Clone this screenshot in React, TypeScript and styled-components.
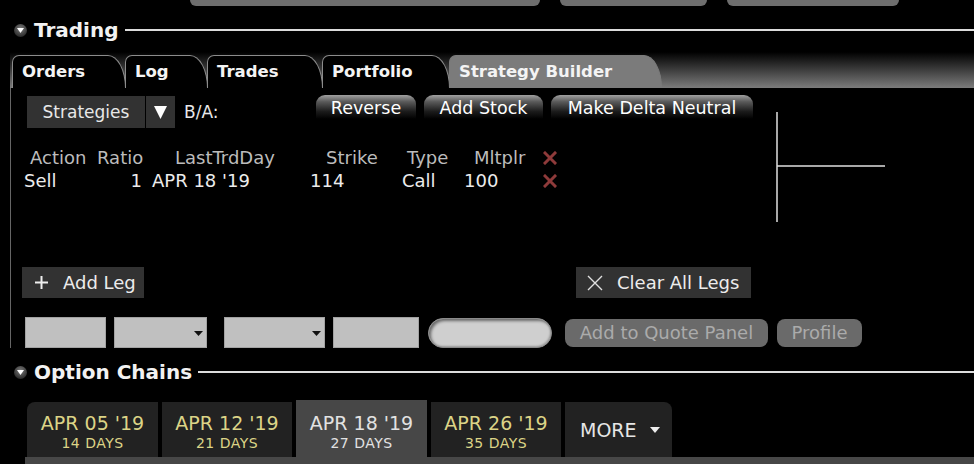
import React from "react";
import styled, { createGlobalStyle } from "styled-components";

const Global = createGlobalStyle`
  html, body { margin: 0; padding: 0; background: #000; overflow: hidden; }
  body { font-family: "DejaVu Sans", Verdana, sans-serif; color: #e6e6e6; }
`;

const Page = styled.div`
  width: 974px;
  height: 464px;
  background: #000;
  display: flex;
  flex-direction: column;
  overflow: hidden;
`;

const TopStrip = styled.div`
  height: 6px;
  display: flex;
  gap: 20px;
  padding-left: 190px;
  flex: none;
`;

const TopShape = styled.div<{ $w: number }>`
  width: ${(p) => p.$w}px;
  height: 6px;
  background: #6e6e6e;
  border-radius: 0 0 6px 6px;
`;

const SectionHeader = styled.div<{ $mt: number }>`
  display: flex;
  align-items: center;
  height: 24px;
  margin-top: ${(p) => p.$mt}px;
  padding-left: 14px;
  flex: none;
`;

const Disclosure = styled.span`
  width: 13px;
  height: 13px;
  border-radius: 50%;
  background: radial-gradient(circle at 50% 35%, #7a7a7a, #2c2c2c 75%);
  display: flex;
  align-items: center;
  justify-content: center;
  flex: none;
`;

const SectionTitle = styled.span`
  margin-left: 7px;
  font-weight: bold;
  font-size: 20px;
  color: #f2f2f2;
  white-space: nowrap;
`;

const Rule = styled.div`
  flex: 1;
  height: 2px;
  background: #dcdcdc;
  margin-left: 6px;
`;

const TabBar = styled.div`
  height: 46px;
  margin-left: 10px;
  padding-left: 2px;
  display: flex;
  align-items: flex-end;
  flex: none;
  background: linear-gradient(to bottom, #000 0%, #000 22%, #7c7c7c 100%);
`;

const Tab = styled.div<{ $w: number; $active?: boolean }>`
  width: ${(p) => p.$w}px;
  height: 33px;
  box-sizing: border-box;
  padding: 6px 0 0 9px;
  margin-right: -1px;
  font-weight: bold;
  font-size: 16.5px;
  color: #f4f4f4;
  white-space: nowrap;
  background: ${(p) => (p.$active ? "#7b7b7b" : "#000")};
  border: 1.5px solid ${(p) => (p.$active ? "#7b7b7b" : "#8c8c8c")};
  border-bottom: none;
  border-radius: 7px 18px 0 0 / 7px 33px 0 0;
`;

const Content = styled.div`
  margin-left: 10px;
  border-left: 1px solid #666;
  padding-top: 7px;
  height: 260px;
  box-sizing: border-box;
  display: flex;
  flex-direction: column;
  flex: none;
`;

const Upper = styled.div`
  display: flex;
  height: 172px;
`;

const LeftUpper = styled.div`
  width: 765px;
  display: flex;
  flex-direction: column;
`;

const Toolbar = styled.div`
  display: flex;
  align-items: flex-start;
  padding-left: 16px;
`;

const FlatButton = styled.div<{ $w: number }>`
  width: ${(p) => p.$w}px;
  height: 32px;
  margin-top: 1px;
  background: #323232;
  color: #e8e8e8;
  font-size: 17px;
  display: flex;
  align-items: center;
  justify-content: center;
  flex: none;
`;

const DropButton = styled(FlatButton)`
  margin-left: 1px;
`;

const BALabel = styled.div`
  width: 132px;
  margin-left: 9px;
  margin-top: 1px;
  line-height: 32px;
  font-size: 17px;
  color: #e8e8e8;
  flex: none;
`;

const GlossButton = styled.div<{ $w: number }>`
  width: ${(p) => p.$w}px;
  height: 24px;
  margin-right: 8px;
  border-radius: 9px 9px 0 0;
  background: linear-gradient(to bottom, #a0a0a0 0%, #5a5a5a 28%, #1c1c1c 68%, #000 100%);
  color: #fff;
  font-size: 17.5px;
  line-height: 26px;
  text-align: center;
  white-space: nowrap;
  flex: none;
`;

const LegGrid = styled.div`
  display: grid;
  grid-template-columns: 70px 52px 154px 96px 62px 82px 20px;
  grid-auto-rows: 23px;
  align-items: center;
  margin-left: 13px;
  margin-top: 18px;
  font-size: 18px;
`;

const HeadCell = styled.div<{ $pl: number }>`
  padding-left: ${(p) => p.$pl}px;
  color: #bcbcbc;
  white-space: nowrap;
  display: flex;
  align-items: center;
`;

const Cell = styled.div<{ $pl?: number; $right?: boolean }>`
  padding-left: ${(p) => p.$pl ?? 0}px;
  padding-right: ${(p) => (p.$right ? 4 : 0)}px;
  color: #ececec;
  white-space: nowrap;
  display: flex;
  align-items: center;
  justify-content: ${(p) => (p.$right ? "flex-end" : "flex-start")};
`;

const Chart = styled.svg`
  margin-top: 17px;
  flex: none;
`;

const LegsRow = styled.div`
  display: flex;
  height: 31px;
  padding-left: 11px;
`;

const LegButton = styled.div<{ $w: number; $ml?: number }>`
  width: ${(p) => p.$w}px;
  height: 31px;
  margin-left: ${(p) => p.$ml ?? 0}px;
  box-sizing: border-box;
  padding-left: ${(p) => (p.$ml ? 11 : 13)}px;
  background: #323232;
  color: #ececec;
  font-size: 18px;
  display: flex;
  align-items: center;
  gap: ${(p) => (p.$ml ? 14 : 15)}px;
  white-space: nowrap;
  flex: none;
`;

const InputsRow = styled.div`
  display: flex;
  align-items: center;
  height: 31px;
  margin-top: 19px;
`;

const InputBox = styled.div<{ $w: number; $ml: number }>`
  position: relative;
  width: ${(p) => p.$w}px;
  height: 31px;
  margin-left: ${(p) => p.$ml}px;
  box-sizing: border-box;
  background: #c0c0c0;
  border: 1px solid #a2a2a2;
  flex: none;
`;

const BoxArrow = styled.svg`
  position: absolute;
  right: 3px;
  bottom: 11px;
`;

const Pill = styled.div<{ $ml: number }>`
  width: 124px;
  height: 30px;
  margin-left: ${(p) => p.$ml}px;
  box-sizing: border-box;
  border-radius: 15px;
  background: #cfcfcf;
  border: 1px solid #8a8a8a;
  box-shadow: inset 2px 2px 3px #6a6a6a, inset -1px -1px 2px #9a9a9a;
  flex: none;
`;

const DimButton = styled.div<{ $w: number; $ml: number }>`
  width: ${(p) => p.$w}px;
  height: 28px;
  margin-left: ${(p) => p.$ml}px;
  border-radius: 8px;
  background: #6a6a6a;
  color: #ababab;
  font-size: 18px;
  display: flex;
  align-items: center;
  justify-content: center;
  white-space: nowrap;
  flex: none;
`;

const DateTabs = styled.div`
  display: flex;
  align-items: flex-end;
  gap: 4px;
  height: 57px;
  margin-top: 16px;
  padding-left: 27px;
  flex: none;
`;

const DateTab = styled.div<{ $w: number; $active?: boolean; $first?: boolean }>`
  width: ${(p) => p.$w}px;
  height: ${(p) => (p.$active ? 57 : 55)}px;
  box-sizing: border-box;
  padding-top: ${(p) => (p.$active ? 12 : 10)}px;
  background: ${(p) => (p.$active ? "#474747" : "#222")};
  color: ${(p) => (p.$active ? "#e2e2e2" : "#dcd487")};
  border-radius: ${(p) => (p.$first ? "8px 0 0 0" : "0")};
  display: flex;
  flex-direction: column;
  align-items: center;
  flex: none;
`;

const DateLine = styled.div`
  font-size: 19px;
  line-height: 22px;
  white-space: nowrap;
`;

const DaysLine = styled.div`
  font-size: 14px;
  letter-spacing: 0.5px;
  line-height: 18px;
  white-space: nowrap;
`;

const MoreTab = styled.div`
  width: 107px;
  height: 55px;
  box-sizing: border-box;
  padding-left: 15px;
  background: #222;
  color: #e6e6e6;
  border-radius: 0 8px 0 0;
  display: flex;
  align-items: center;
  gap: 13px;
  font-size: 19px;
  flex: none;
`;

const BottomBar = styled.div`
  height: 7px;
  margin-left: 25px;
  background: #474747;
  flex: none;
`;

const DownTri = ({ w, h, color }: { w: number; h: number; color: string }) => (
  <svg width={w} height={h} viewBox={`0 0 ${w} ${h}`}>
    <polygon points={`0,0 ${w},0 ${w / 2},${h}`} fill={color} />
  </svg>
);

const RedX = () => (
  <svg width="14" height="14" viewBox="0 0 14 14">
    <path d="M2 2 L12 12 M12 2 L2 12" stroke="#8e3a3a" strokeWidth="3" strokeLinecap="square" />
  </svg>
);

const Header = ({ title, mt }: { title: string; mt: number }) => (
  <SectionHeader $mt={mt}>
    <Disclosure>
      <DownTri w={7} h={5} color="#fff" />
    </Disclosure>
    <SectionTitle>{title}</SectionTitle>
    <Rule />
  </SectionHeader>
);

const tabs = [
  { label: "Orders", w: 114 },
  { label: "Log", w: 83 },
  { label: "Trades", w: 116 },
  { label: "Portfolio", w: 128 },
  { label: "Strategy Builder", w: 213, active: true },
];

const dates = [
  { d: "APR 05 '19", n: "14 DAYS", w: 131 },
  { d: "APR 12 '19", n: "21 DAYS", w: 130 },
  { d: "APR 18 '19", n: "27 DAYS", w: 131, active: true },
  { d: "APR 26 '19", n: "35 DAYS", w: 130 },
];

export default function App() {
  return (
    <Page>
      <Global />
      <TopStrip>
        <TopShape $w={350} />
        <TopShape $w={147} />
        <TopShape $w={172} />
      </TopStrip>

      <Header title="Trading" mt={12} />

      <TabBar>
        {tabs.map((t) => (
          <Tab key={t.label} $w={t.w} $active={t.active}>
            {t.label}
          </Tab>
        ))}
      </TabBar>

      <Content>
        <Upper>
          <LeftUpper>
            <Toolbar>
              <FlatButton $w={118}>Strategies</FlatButton>
              <DropButton $w={29}>
                <DownTri w={13} h={13} color="#fff" />
              </DropButton>
              <BALabel>B/A:</BALabel>
              <GlossButton $w={100}>Reverse</GlossButton>
              <GlossButton $w={119}>Add Stock</GlossButton>
              <GlossButton $w={202}>Make Delta Neutral</GlossButton>
            </Toolbar>
            <LegGrid>
              <HeadCell $pl={6}>Action</HeadCell>
              <HeadCell $pl={3}>Ratio</HeadCell>
              <HeadCell $pl={29}>LastTrdDay</HeadCell>
              <HeadCell $pl={26}>Strike</HeadCell>
              <HeadCell $pl={11}>Type</HeadCell>
              <HeadCell $pl={16}>Mltplr</HeadCell>
              <HeadCell $pl={3}>
                <RedX />
              </HeadCell>
              <Cell>Sell</Cell>
              <Cell $right>1</Cell>
              <Cell $pl={6}>APR 18 '19</Cell>
              <Cell $pl={10}>114</Cell>
              <Cell $pl={6}>Call</Cell>
              <Cell $pl={6}>100</Cell>
              <Cell $pl={3}>
                <RedX />
              </Cell>
            </LegGrid>
          </LeftUpper>
          <Chart width="110" height="112" viewBox="0 0 110 112">
            <line x1="1" y1="0" x2="1" y2="110" stroke="#e0e0e0" strokeWidth="1.5" />
            <line x1="1" y1="54" x2="109" y2="54" stroke="#e0e0e0" strokeWidth="1.5" />
          </Chart>
        </Upper>

        <LegsRow>
          <LegButton $w={122}>
            <svg width="13" height="13" viewBox="0 0 13 13">
              <path d="M6.5 0 V13 M0 6.5 H13" stroke="#eee" strokeWidth="2" />
            </svg>
            Add Leg
          </LegButton>
          <LegButton $w={175} $ml={432}>
            <svg width="16" height="16" viewBox="0 0 16 16">
              <path d="M1 1 L15 15 M15 1 L1 15" stroke="#e0e0e0" strokeWidth="1.4" />
            </svg>
            Clear All Legs
          </LegButton>
        </LegsRow>

        <InputsRow>
          <InputBox $w={81} $ml={14} />
          <InputBox $w={93} $ml={8}>
            <BoxArrow width="9" height="5" viewBox="0 0 9 5">
              <polygon points="0,0 9,0 4.5,5" fill="#111" />
            </BoxArrow>
          </InputBox>
          <InputBox $w={101} $ml={17}>
            <BoxArrow width="9" height="5" viewBox="0 0 9 5">
              <polygon points="0,0 9,0 4.5,5" fill="#111" />
            </BoxArrow>
          </InputBox>
          <InputBox $w={86} $ml={8} />
          <Pill $ml={9} />
          <DimButton $w={203} $ml={13}>
            Add to Quote Panel
          </DimButton>
          <DimButton $w={85} $ml={9}>
            Profile
          </DimButton>
        </InputsRow>
      </Content>

      <Header title="Option Chains" mt={12} />

      <DateTabs>
        {dates.map((d, i) => (
          <DateTab key={d.d} $w={d.w} $active={d.active} $first={i === 0}>
            <DateLine>{d.d}</DateLine>
            <DaysLine>{d.n}</DaysLine>
          </DateTab>
        ))}
        <MoreTab>
          MORE
          <DownTri w={10} h={6} color="#eee" />
        </MoreTab>
      </DateTabs>
      <BottomBar />
    </Page>
  );
}
